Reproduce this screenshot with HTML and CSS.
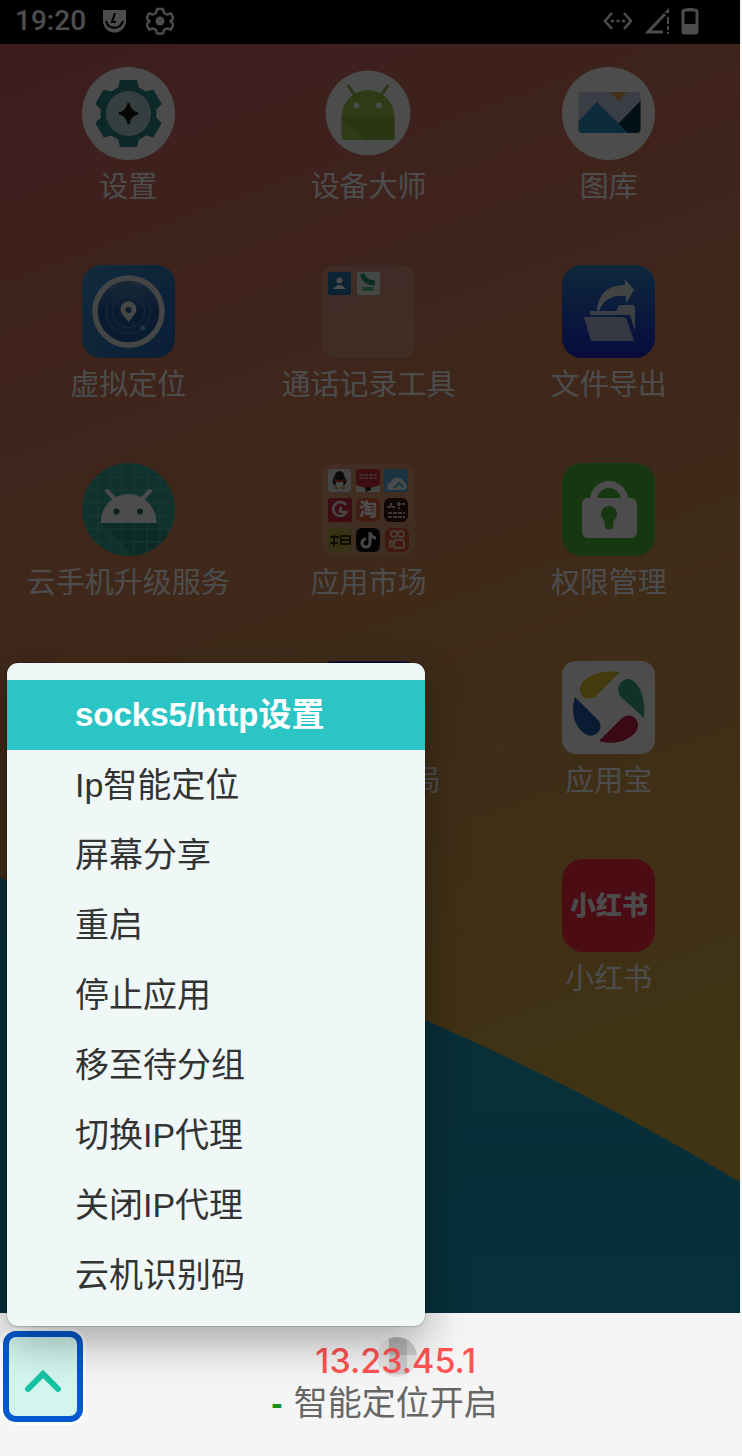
FILE: index.html
```html
<!DOCTYPE html>
<html lang="zh-CN">
<head>
<meta charset="utf-8">
<meta name="viewport" content="width=device-width, initial-scale=1">
<title>云手机</title>
<link rel="stylesheet" href="styles.css">
</head>
<body>
<main class="screen">
  <svg class="wave" viewBox="0 0 740 1313" preserveAspectRatio="none" aria-hidden="true">
    <defs><linearGradient id="sea" x1="0" y1="0" x2="0" y2="1"><stop offset="0" stop-color="#279eb8"/><stop offset="1" stop-color="#16a0c4"/></linearGradient></defs>
    <path d="M0 878Q215 942 425 1020Q590 1092 740 1182V1313H0Z" fill="url(#sea)"/>
  </svg>

  <header class="status">
    <span class="clock">19:20</span>
    <svg class="status-icon" viewBox="0 0 28 28" aria-hidden="true"><path d="M3 3h23v11a11.500 11.500 0 0 1-23 0Z" fill="#fff"/><path d="M15 6l-3 9h4M6 14c2 9 14 9 17 0" fill="none" stroke="#000" stroke-width="2"/></svg>
    <svg class="status-icon status-gear" viewBox="0 0 28 28" aria-hidden="true"><path d="M11 2h6l1 4 3 1.500 4-1 2.500 5-3 2.500 3 3.500-2.500 5-4-1-3 1.500-1 3.500h-6l-1-3.500-3-1.500-4 1-2.500-5 3-3.500-3-2.500 2.500-5 4 1 3-1.500Z" fill="none" stroke="#fff" stroke-width="2.500" stroke-linejoin="round"/><circle cx="14" cy="14" r="4.500" fill="#fff"/></svg>
    <span class="spacer"></span>
    <svg class="status-icon wide" viewBox="0 0 30 28" aria-hidden="true"><path d="M9 6L2 14l7 8M21 6l7 8-7 8" fill="none" stroke="#fff" stroke-width="2.500"/><path d="M8 14h14" stroke="#fff" stroke-width="2.500" stroke-dasharray="3 2.500"/></svg>
    <svg class="status-icon" viewBox="0 0 28 28" aria-hidden="true"><path d="M22 7L5 25h15" fill="none" stroke="#fff" stroke-width="3"/><path d="M22 5l4-4v5h-4ZM24 10h2v7h-2ZM24 19h2v4h-2ZM24 25h2v2h-2Z" fill="#fff"/></svg>
    <svg class="status-icon battery" viewBox="0 0 18 28" aria-hidden="true"><path d="M6 1h6v3H6Z" fill="#fff"/><rect x="2" y="3" width="14" height="23" rx="2" fill="none" stroke="#fff" stroke-width="3"/><path d="M2 17h14v9H2Z" fill="#fff"/></svg>
  </header>

  <div class="apps">
    <button class="app" type="button">
      <svg class="icon" viewBox="0 0 93 93" aria-hidden="true"><circle cx="46.500" cy="46.500" r="46.500" fill="#fff"/><g fill="#28858a"><circle cx="46.500" cy="46.500" r="28"/><path id="tooth" d="M35 25L38 13h17l3 12Z"/><use href="#tooth" transform="rotate(60 46.500 46.500)"/><use href="#tooth" transform="rotate(120 46.500 46.500)"/><use href="#tooth" transform="rotate(180 46.500 46.500)"/><use href="#tooth" transform="rotate(240 46.500 46.500)"/><use href="#tooth" transform="rotate(300 46.500 46.500)"/></g><circle cx="46.500" cy="46.500" r="22.500" fill="#b5d2d4"/><path d="M46.500 36Q48 45 56 46.500Q48 48 46.500 57Q45 48 37 46.500Q45 45 46.500 36Z" fill="#181818" stroke="#181818" stroke-width="2"/></svg>
      <span class="label">设置</span>
    </button>
    <button class="app" type="button">
      <svg class="icon" viewBox="0 0 93 93" aria-hidden="true"><circle cx="46" cy="46" r="42.500" fill="#fff"/><path d="M19.500 50a26.500 27 0 0 1 53 0v20q0 3-3 3h-47q-3 0-3-3Z" fill="#9bc64a"/><path d="M19.500 50h53v20q0 3-3 3H45L20 54Z" fill="#8cb344"/><path d="M26.500 19l6 9M65.500 19l-6 9" stroke="#8fb844" stroke-width="3" stroke-linecap="round"/><circle cx="34.500" cy="38.500" r="3" fill="#fff"/><circle cx="57" cy="38.500" r="3" fill="#fff"/></svg>
      <span class="label">设备大师</span>
    </button>
    <button class="app" type="button">
      <svg class="icon" viewBox="0 0 93 93" aria-hidden="true"><circle cx="46.500" cy="46.500" r="46.500" fill="#fff"/><rect x="16.500" y="25" width="62" height="41" rx="4" fill="#c4cce2"/><path d="M48 25h17l-8.500 9Z" fill="#e8a050"/><path d="M56 57L78.500 34v28q0 4-4 4H60Z" fill="#0c3a4c"/><path d="M16.500 54L35 35l31 31H20.500q-4 0-4-4Z" fill="#2b93c8"/></svg>
      <span class="label">图库</span>
    </button>

    <button class="app" type="button">
      <svg class="icon" viewBox="0 0 93 93" aria-hidden="true"><defs><linearGradient id="loc" x1="0" y1="0" x2="1" y2="1"><stop offset="0" stop-color="#3e90cc"/><stop offset="1" stop-color="#2464b4"/></linearGradient><linearGradient id="dial" x1="0" y1="0" x2="0" y2="1"><stop offset="0" stop-color="#5a8fbe"/><stop offset=".5" stop-color="#2058a0"/><stop offset="1" stop-color="#1e609c"/></linearGradient></defs><rect width="93" height="93" rx="19" fill="url(#loc)"/><circle cx="46.500" cy="46.500" r="33.500" fill="url(#dial)" stroke="#e4eaea" stroke-width="5.500"/><g fill="none" stroke="#3c80b4" stroke-width="1.500"><circle cx="46.500" cy="46.500" r="16"/><circle cx="46.500" cy="46.500" r="22"/></g><path d="M46.500 57L40 49a8 8 0 1 1 13 0Z" fill="#e8eeee"/><circle cx="46.500" cy="45" r="3" fill="#28619c"/><circle cx="61" cy="63" r="2.500" fill="#58c8d8"/></svg>
      <span class="label">虚拟定位</span>
    </button>
    <button class="app" type="button">
      <svg class="icon" viewBox="0 0 93 93" aria-hidden="true"><rect width="93" height="93" rx="14" fill="#f0e8f0" opacity=".24"/><rect x="6" y="7" width="23" height="23" fill="#2576a8"/><circle cx="17.500" cy="15.500" r="3" fill="#fff"/><path d="M11 24q6.500-8 13 0Z" fill="#fff"/><rect x="35" y="7" width="23" height="23" rx="2" fill="#dff0e8"/><path d="M40 9q3 9 13 9" fill="none" stroke="#1b9a68" stroke-width="5"/><path d="M40 22h12v4H40Z" fill="#5bbd94"/></svg>
      <span class="label">通话记录工具</span>
    </button>
    <button class="app" type="button">
      <svg class="icon" viewBox="0 0 93 93" aria-hidden="true"><defs><linearGradient id="file" x1="0" y1="0" x2="0" y2="1"><stop offset="0" stop-color="#2f88c8"/><stop offset="1" stop-color="#1a28cc"/></linearGradient></defs><rect width="93" height="93" rx="20" fill="url(#file)"/><path d="M35 46C36 30 45 20 63 20V14L72 25L64 38V31C50 30 42 34 37 46Z" fill="#dce6e4"/><path d="M28 46h26l3-6h13q3 0 3 3v23l-5-16H28Z" fill="#c8d4e0"/><path d="M22 52h38q4 0 5 3l7 21H29Z" fill="#b4bce0"/></svg>
      <span class="label">文件导出</span>
    </button>

    <button class="app" type="button">
      <svg class="icon" viewBox="0 0 93 93" aria-hidden="true"><defs><clipPath id="disc"><circle cx="46.500" cy="46.500" r="46.500"/></clipPath></defs><g clip-path="url(#disc)"><path d="M0 0h93v93H0Z" fill="#36a898"/><path d="M19 60h55L93 79v14H52Z" fill="#2b8c80"/><path d="M16 0v93M28 0v93M40 0v93M52 0v93M65 0v93M78 0v93M0 14h93M0 27h93M0 40h93M0 53h93M0 66h93M0 79h93" stroke="#76c8bc" stroke-width="1" opacity=".7"/></g><path d="M18.500 60a28 29 0 0 1 56 0Z" fill="#fff"/><path d="M25 28l9 9M68 28l-9 9" stroke="#fff" stroke-width="4" stroke-linecap="round"/><circle cx="34.500" cy="48.500" r="3" fill="#246e66"/><circle cx="58" cy="48.500" r="3" fill="#246e66"/></svg>
      <span class="label">云手机升级服务</span>
    </button>
    <button class="app" type="button">
      <svg class="icon" viewBox="0 0 93 93" aria-hidden="true"><rect width="93" height="93" rx="14" fill="#fff" opacity=".16"/>
        <rect x="6" y="6" width="23" height="23" rx="3" fill="#e8e8e8"/><ellipse cx="17.500" cy="18" rx="7" ry="6" fill="#222"/><ellipse cx="17.500" cy="14" rx="5" ry="6" fill="#222"/><ellipse cx="17.500" cy="21" rx="4" ry="3" fill="#eee"/><path d="M12 16.500q5.500 4 11 0" fill="none" stroke="#d04030" stroke-width="2"/><path d="M12 25h4M19 25h4" stroke="#e09a30" stroke-width="2"/>
        <rect x="34" y="6" width="24" height="23" rx="3" fill="#c8303c"/><path d="M34 22q12 5 24 0v7H34Z" fill="#e8e8e8"/><path d="M43 24h6v3l-5 2Z" fill="#222"/><path d="M37 12h18M37 15h18" stroke="#e89090" stroke-width="2" stroke-dasharray="4 1"/>
        <rect x="62" y="6" width="24" height="23" rx="2" fill="#5aa8d8"/><path d="M66 27a5 5 0 0 1 3-8a7 7 0 0 1 13 0q5 4 1 8Z" fill="#eef4f8"/><path d="M72 25l5-5 4 4" fill="none" stroke="#5aa8d8" stroke-width="2"/>
        <rect x="6" y="35" width="24" height="24" rx="2" fill="#c8283c"/><path d="M24 42a7 7 0 1 0 1 6M20 45a2 2 0 1 0 0 4h5" fill="none" stroke="#eee" stroke-width="2.500"/>
        <rect x="34" y="35" width="24" height="24" rx="6" fill="#d86038"/><text x="46" y="53" class="glyph glyph-tao">淘</text>
        <rect x="62" y="35" width="24" height="24" rx="6" fill="#38180f"/><path d="M65 44h8M69 40v5M75 41h8M77 39v7M66 50h17M66 54h17" stroke="#cba" stroke-width="2" stroke-dasharray="4 1"/>
        <rect x="6" y="65" width="24" height="24" rx="1" fill="#b8a848"/><path d="M8 74h9M8 80h8M12 72v11M19 73h9v8h-9ZM19 77h9" fill="none" stroke="#33300c" stroke-width="2"/>
        <rect x="34" y="65" width="24" height="24" rx="6" fill="#0c0c16"/><path d="M48 69v11a4 4 0 1 1-4-4M48 70q2 5 6 5" fill="none" stroke="#eee" stroke-width="3"/>
        <rect x="63" y="65" width="24" height="24" rx="6" fill="#d85030"/><g fill="none" stroke="#f4c8b8" stroke-width="2"><circle cx="72" cy="71" r="3"/><circle cx="79" cy="71" r="3"/><rect x="72" y="77" width="10" height="8" rx="2"/><path d="M68 78l4 2v2l-4 2Z"/></g></svg>
      <span class="label">应用市场</span>
    </button>
    <button class="app" type="button">
      <svg class="icon" viewBox="0 0 93 93" aria-hidden="true"><rect width="93" height="93" rx="20" fill="#4fb838"/><path d="M31.500 37a15.500 15.500 0 0 1 31 0" fill="none" stroke="#fff" stroke-width="7"/><rect x="20" y="35" width="55" height="40" rx="6" fill="#fff"/><circle cx="47" cy="51" r="8" fill="#4fb838"/><path d="M47 54v8" stroke="#4fb838" stroke-width="9" stroke-linecap="round"/></svg>
      <span class="label">权限管理</span>
    </button>

    <button class="app app-middle" type="button">
      <svg class="icon" viewBox="0 0 93 93" aria-hidden="true"><rect width="93" height="93" rx="10" fill="#283cb8"/></svg>
      <span class="label label-tail">局</span>
    </button>
    <button class="app" type="button">
      <svg class="icon" viewBox="0 0 93 93" aria-hidden="true"><rect width="93" height="93" rx="14" fill="#fff"/><path d="M58 11C40 9 20 15 18 27C17 36 26 41 34 35Z" fill="#e8c030"/><path d="M82 57L58 35C53 27 59 18 67 18C77 20 84 37 82 57Z" fill="#40a880"/><path d="M37 80L60 57C68 51 77 57 76 66C72 79 53 85 37 80Z" fill="#c02048"/><path d="M13 36L37 60C42 69 33 77 25 74C13 68 8 52 13 36Z" fill="#2060b0"/></svg>
      <span class="label">应用宝</span>
    </button>

    <button class="app app-last" type="button">
      <svg class="icon" viewBox="0 0 93 93" aria-hidden="true"><rect width="93" height="93" rx="21" fill="#ff2a44"/><text x="47" y="56" class="glyph glyph-red">小红书</text></svg>
      <span class="label">小红书</span>
    </button>
  </div>
</main>

<footer class="bar">
  <button class="toggle" type="button" aria-label="展开菜单" aria-expanded="true">
    <svg class="chevron" viewBox="0 0 38 24" aria-hidden="true"><path d="M4 20L19 5l15 15" fill="none" stroke="#14c3a2" stroke-width="6" stroke-linecap="round"/></svg>
  </button>
  <div class="info">
    <span class="dash">-</span>
    <div class="lines">
      <div class="ip">
        <svg class="blot" viewBox="0 0 40 42" aria-hidden="true"><defs><clipPath id="round"><circle cx="20" cy="21" r="20"/></clipPath></defs><g clip-path="url(#round)"><path d="M0 0h40v42H0Z" fill="#e4e4e4"/><path d="M12 0h18v19H12Z" fill="#b4b4b4"/><path d="M30 0h10v19H30ZM12 19h18v19H12Z" fill="#cacaca"/></g></svg>
        <span class="ip-text">13.23.45.1</span>
      </div>
      <div class="state">智能定位开启</div>
    </div>
  </div>
  <ul class="menu">
    <li><button class="item item-active" type="button">socks5/http设置</button></li>
    <li><button class="item" type="button">Ip智能定位</button></li>
    <li><button class="item" type="button">屏幕分享</button></li>
    <li><button class="item" type="button">重启</button></li>
    <li><button class="item" type="button">停止应用</button></li>
    <li><button class="item" type="button">移至待分组</button></li>
    <li><button class="item" type="button">切换IP代理</button></li>
    <li><button class="item" type="button">关闭IP代理</button></li>
    <li><button class="item" type="button">云机识别码</button></li>
  </ul>
</footer>
</body>
</html>
```
FILE: styles.css
```css
* {
  box-sizing: border-box;
}

body {
  margin: 0;
  min-height: 100vh;
  display: flex;
  flex-direction: column;
  background: #f5f5f5;
  font-family: "Liberation Sans", "Noto Sans CJK SC", sans-serif;
}

button {
  margin: 0;
  padding: 0;
  border: 0;
  background: none;
  font: inherit;
  color: inherit;
  cursor: pointer;
}

.screen {
  position: relative;
  flex: 1;
  margin-right: 2px;
  background: linear-gradient(160deg, #cc6068 0%, #d06c64 12%, #d2785c 25%, #d28858 42%, #d39c4e 62%, #d8ae40 85%);
}

/* dimming layer over the whole phone screen */
.screen::after {
  content: "";
  position: absolute;
  inset: 0;
  background: rgba(0, 0, 0, 0.7);
  pointer-events: none;
}

.wave {
  position: absolute;
  inset: 0;
  width: 100%;
  height: 100%;
}

.status {
  position: relative;
  display: flex;
  align-items: center;
  gap: 10px;
  height: 44px;
  padding: 0 41px 2px 15px;
  background: #000;
  color: #fff;
}

.clock {
  margin-right: 4px;
  font: 500 28px/32px Roboto, sans-serif;
}

.status-icon {
  width: 28px;
  height: 28px;
}

.status-gear {
  margin-left: 8px;
}

.wide {
  width: 30px;
}

.battery {
  width: 18px;
}

.spacer {
  flex: 1;
}

.apps {
  position: relative;
  display: grid;
  grid-template-columns: repeat(3, 1fr);
  grid-auto-rows: 198px;
  padding: 23px 11px 0 8px;
}

.app {
  display: flex;
  flex-direction: column;
  align-items: center;
  gap: 8px;
}

.app-middle {
  grid-column: 2;
}

.app-last {
  grid-column: 3;
}

.icon {
  width: 93px;
  height: 93px;
  flex: none;
}

.label {
  font: 29px/32px "Noto Sans CJK SC", sans-serif;
  color: #fff;
  white-space: nowrap;
}

.label-tail {
  align-self: stretch;
  padding-right: 48px;
  text-align: right;
}

.glyph {
  font-family: "Noto Sans CJK SC", sans-serif;
  font-weight: 900;
  fill: #fff;
  text-anchor: middle;
}

.glyph-tao {
  font-size: 18px;
}

.glyph-red {
  font-size: 26px;
}

.bar {
  position: relative;
  display: flex;
  align-items: flex-start;
  min-height: 143px;
  padding: 18px 56px 0 3px;
}

.toggle {
  display: grid;
  place-items: center;
  flex: none;
  width: 80px;
  height: 91px;
  padding-top: 8px;
  border: 6px solid #0459cf;
  border-radius: 13px;
  background: #d3f5ee;
  box-shadow: 0 0 0 3px #fff;
}

.chevron {
  width: 38px;
  height: 24px;
}

.info {
  flex: 1;
  display: flex;
  justify-content: center;
  align-items: flex-end;
  gap: 11px;
  padding-top: 8px;
  font-size: 34px;
  line-height: 43px;
}

.dash {
  color: #16911a;
  font-weight: 700;
}

.lines {
  text-align: center;
  color: #666;
}

.ip {
  position: relative;
  color: #ff5252;
  font-family: Inter, sans-serif;
  font-weight: 500;
}

.ip-text {
  position: relative;
}

.blot {
  position: absolute;
  left: 83px;
  top: -3px;
  width: 40px;
  height: 42px;
}

.menu {
  position: absolute;
  left: 7px;
  bottom: calc(100% - 13px);
  width: 418px;
  max-width: calc(100% - 14px);
  margin: 0;
  padding: 17px 0 16px;
  list-style: none;
  overflow: hidden;
  border-radius: 11px;
  background: #eff8f7;
  box-shadow: 0 0 0 1px rgba(0, 0, 0, 0.15), 0 16px 44px rgba(0, 0, 0, 0.32);
}

.item {
  display: block;
  width: 100%;
  padding-left: 68px;
  text-align: left;
  font-size: 34px;
  line-height: 70px;
  color: #333;
}

.item-active {
  background: #2cc5c5;
  color: #fff;
  font-size: 33px;
  font-weight: 700;
}
```
